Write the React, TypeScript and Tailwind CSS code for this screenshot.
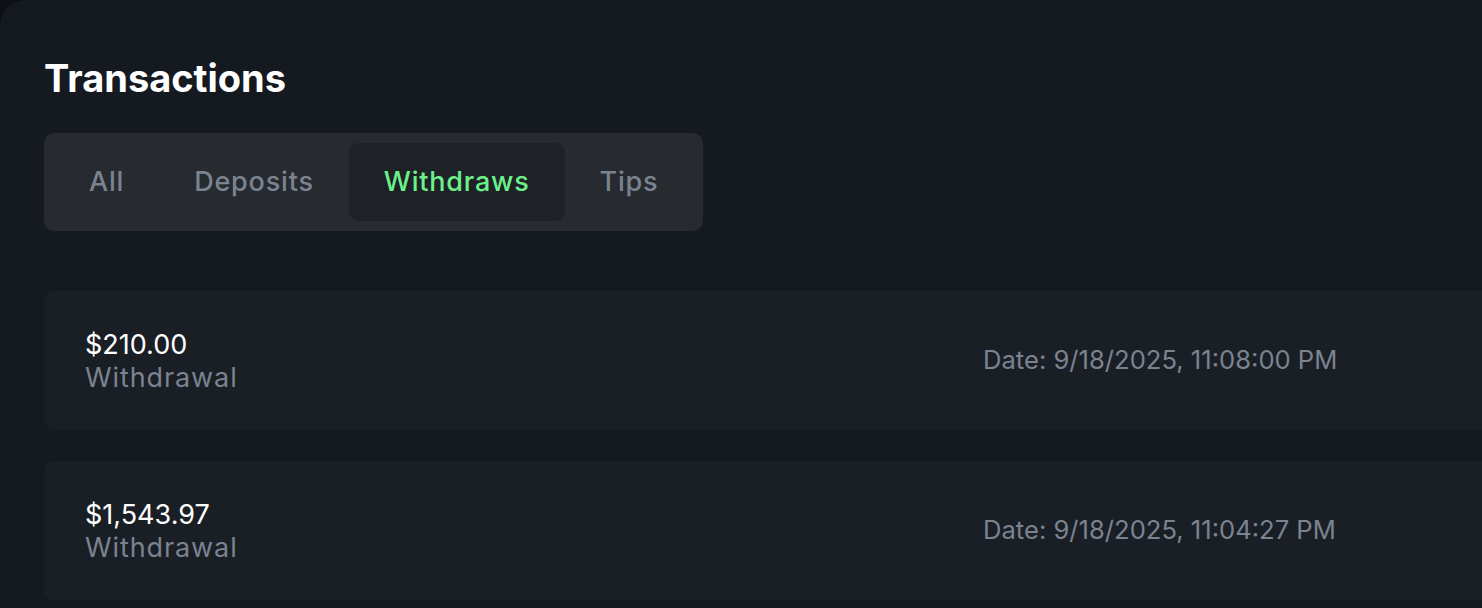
import { useState } from 'react'

const tabs = ['All', 'Deposits', 'Withdraws', 'Tips']

const rows = [
  { amount: '$210.00', type: 'Withdrawal', date: '9/18/2025, 11:08:00 PM' },
  { amount: '$1,543.97', type: 'Withdrawal', date: '9/18/2025, 11:04:27 PM' },
]

export default function App() {
  const [active, setActive] = useState('Withdraws')

  return (
    <div className="h-[608px] w-[1482px] overflow-hidden bg-[#0d1016] font-['Inter',sans-serif]">
      <div className="h-full w-[1540px] rounded-tl-[26px] bg-[#151a21] pl-[44px] pt-[56px]">
        <h1 className="text-[38px] font-bold leading-[44px] text-white">Transactions</h1>

        <div className="mt-[33px] inline-flex rounded-[10px] bg-[#272b30] p-[10px]">
          {tabs.map((t) => (
            <button
              key={t}
              onClick={() => setActive(t)}
              className={
                t === active
                  ? 'h-[78px] rounded-[10px] bg-[#1e2125] px-[35px] text-[27px] font-medium tracking-[0.8px] text-[#6cf08c]'
                  : 'h-[78px] rounded-[10px] px-[35px] text-[27px] font-medium tracking-[0.8px] text-[#7b8390]'
              }
            >
              {t}
            </button>
          ))}
        </div>

        <div className="mt-[60px] flex flex-col gap-[31px]">
          {rows.map((r) => (
            <div key={r.amount} className="flex h-[139px] items-center rounded-[10px] bg-[#1a1f26] pl-[41px]">
              <div className="flex w-[898px] flex-col">
                <span className="text-[27px] leading-[33px] text-white">{r.amount}</span>
                <span className="text-[27px] leading-[33px] tracking-[0.9px] text-[#7b8390]">{r.type}</span>
              </div>
              <span className="text-[25.6px] text-[#7b8390]">Date: {r.date}</span>
            </div>
          ))}
        </div>
      </div>
    </div>
  )
}
